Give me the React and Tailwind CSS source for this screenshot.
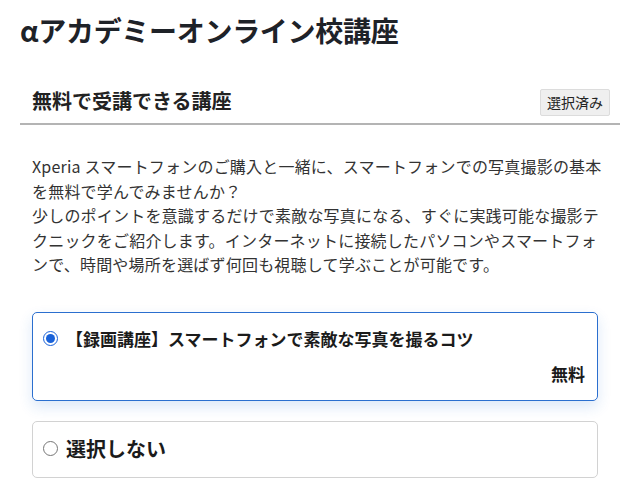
export default function App() {
  return (
    <div className="w-[640px] h-[497px] overflow-hidden bg-white font-['Noto_Sans_CJK_JP','Noto_Sans',sans-serif] text-[#222] px-5 pt-[12px]">
      <h1 className="text-[28px] leading-[36px] font-bold text-[#1e2228] tracking-[-0.3px]">αアカデミーオンライン校講座</h1>
      <div className="mt-[38px] flex items-center justify-between pl-3 pr-[10px] pb-[7px] border-b-2 border-[#b4b4b4]">
        <h2 className="text-[20px] leading-[28px] font-bold text-[#222]">無料で受講できる講座</h2>
        <button className="mt-[3px] h-[27px] px-[6px] text-[14px] leading-[25px] bg-[#efefef] border border-[#dcdcdc] rounded-[2px] text-[#222]">選択済み</button>
      </div>
      <p className="mt-[29px] ml-3 w-[572px] text-[16px] leading-[24.5px] text-[#333] tracking-[0.2px]">
        Xperia スマートフォンのご購入と一緒に、スマートフォンでの写真撮影の基本を無料で学んでみませんか？
        <br />
        少しのポイントを意識するだけで素敵な写真になる、すぐに実践可能な撮影テクニックをご紹介します。インターネットに接続したパソコンやスマートフォンで、時間や場所を選ばず何回も視聴して学ぶことが可能です。
      </p>
      <div className="mt-[35px] ml-3 w-[566px] h-[89px] border-[1.5px] border-[#2b6fcf] rounded-[5px] shadow-[0_6px_14px_rgba(40,110,210,0.16)] px-[10px] pt-[13px]">
        <label className="flex items-start gap-[8px]">
          <input type="radio" name="course" defaultChecked className="mt-[5px] w-[15px] h-[15px] accent-[#1a62d8]" />
          <span className="text-[17px] leading-[26px] font-bold text-[#1b1b1b]">【録画講座】スマートフォンで素敵な写真を撮るコツ</span>
        </label>
        <div className="mt-[9px] pr-[2px] text-right text-[17px] leading-[26px] font-bold text-[#1b1b1b]">無料</div>
      </div>
      <div className="mt-[20px] ml-3 w-[566px] h-[57px] border border-[#d2d2d2] rounded-[5px] px-[10px] flex items-center">
        <label className="flex items-center gap-[8px]">
          <input type="radio" name="course" className="w-[15px] h-[15px] -mt-[2px]" />
          <span className="text-[20px] leading-[28px] font-bold text-[#1b1b1b]">選択しない</span>
        </label>
      </div>
    </div>
  );
}
